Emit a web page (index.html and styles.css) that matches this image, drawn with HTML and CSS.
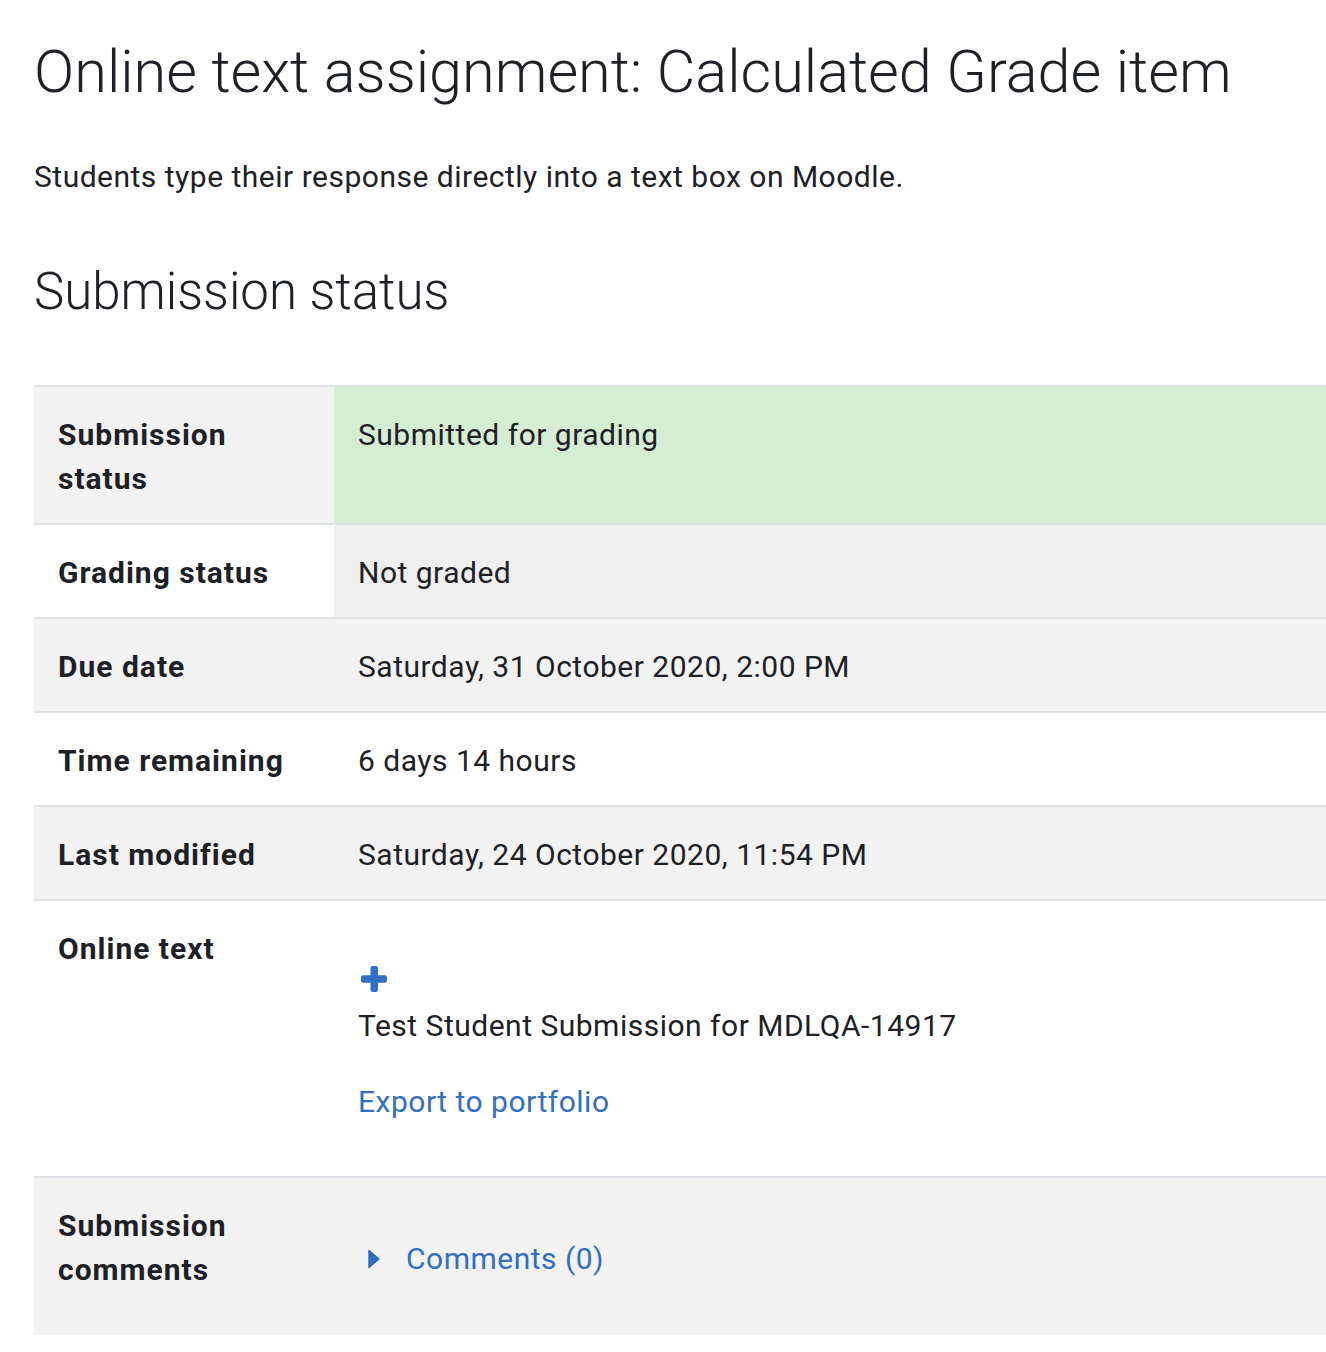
FILE: index.html
```html
<!DOCTYPE html>
<html lang="en">
<head>
    <meta charset="UTF-8">
    <meta name="viewport" content="width=device-width, initial-scale=1.0">
    <title>Online text assignment: Calculated Grade item</title>
    <link rel="stylesheet" href="styles.css">
</head>
<body>
<!--Page-->
<div class="page">
    <h2 class="pageTitle">Online text assignment: Calculated Grade item</h2>
    <p class="intro">Students type their response directly into a text box on Moodle.</p>

    <h3 class="sectionTitle">Submission status</h3>

    <!--Status table-->
    <table class="statusTable">
        <tr class="odd">
            <th>Submission<br>status</th>
            <td class="submitted">Submitted for grading</td>
        </tr>
        <tr>
            <th>Grading status</th>
            <td class="notGraded">Not graded</td>
        </tr>
        <tr class="odd">
            <th>Due date</th>
            <td>Saturday, 31 October 2020, 2:00 PM</td>
        </tr>
        <tr>
            <th>Time remaining</th>
            <td>6 days 14 hours</td>
        </tr>
        <tr class="odd">
            <th>Last modified</th>
            <td>Saturday, 24 October 2020, 11:54 PM</td>
        </tr>
        <tr>
            <th>Online text</th>
            <td>
                <div class="expandIcon">
                    <svg width="26" height="26" viewBox="0 0 26 26">
                        <rect x="9.5" y="0" width="7.5" height="26" rx="2.2" fill="#306fc3"/>
                        <rect x="0" y="9.3" width="26" height="7.5" rx="2.2" fill="#306fc3"/>
                    </svg>
                </div>
                <div class="summary">Test Student Submission for MDLQA-14917</div>
                <a class="link exportLink" href="#">Export to portfolio</a>
            </td>
        </tr>
        <tr class="odd">
            <th>Submission<br>comments</th>
            <td>
                <div class="comments">
                    <svg class="caret" width="12" height="20" viewBox="0 0 12 20">
                        <path d="M1 1.5L11 10L1 18.5Z" fill="#306fc3" stroke="#306fc3" stroke-width="1.5" stroke-linejoin="round"/>
                    </svg>
                    <a class="link" href="#">Comments (0)</a>
                </div>
            </td>
        </tr>
    </table>
</div>
</body>
</html>
```

FILE: styles.css
```css
html, body {
    overflow: hidden;
}
body {
    margin: 0;
    background: #fff;
    color: #1d2125;
    font-family: Roboto, "Noto Sans", sans-serif;
    font-size: 30px;
    line-height: 44px;
    letter-spacing: 0.5px;
}
.page {
    padding: 36px 0 0 34px;
}
.pageTitle {
    margin: 0;
    font-size: 59.4px;
    font-weight: 300;
    line-height: 72px;
    letter-spacing: 0;
}
.intro {
    margin: 47px 0 0 0;
}
.sectionTitle {
    margin: 62px 0 0 0;
    font-size: 51px;
    font-weight: 300;
    line-height: 62px;
    letter-spacing: 0;
}
.statusTable {
    margin-top: 62px;
    width: 100%;
    border-collapse: collapse;
}
.statusTable th,
.statusTable td {
    border-top: 2px solid #dee2e6;
    padding: 26px 24px 22px 24px;
    text-align: left;
    vertical-align: top;
}
.statusTable th {
    width: 252px;
    font-weight: 700;
    letter-spacing: 1px;
}
.statusTable tr.odd th,
.statusTable tr.odd td {
    background-color: #f2f2f2;
}
.statusTable tr td.submitted {
    background-color: #d5edd2;
}
.statusTable tr td.notGraded {
    background-color: #efefef;
}
.expandIcon {
    margin: 39px 0 0 3px;
    height: 26px;
    line-height: 0;
}
.summary {
    margin-top: 12px;
}
.link {
    color: #306fc3;
    text-decoration: none;
}
.exportLink {
    display: inline-block;
    margin-top: 32px;
    margin-bottom: 30px;
}
.comments {
    display: flex;
    align-items: center;
    gap: 26px;
    padding: 33px 0 32px 10px;
}
```
